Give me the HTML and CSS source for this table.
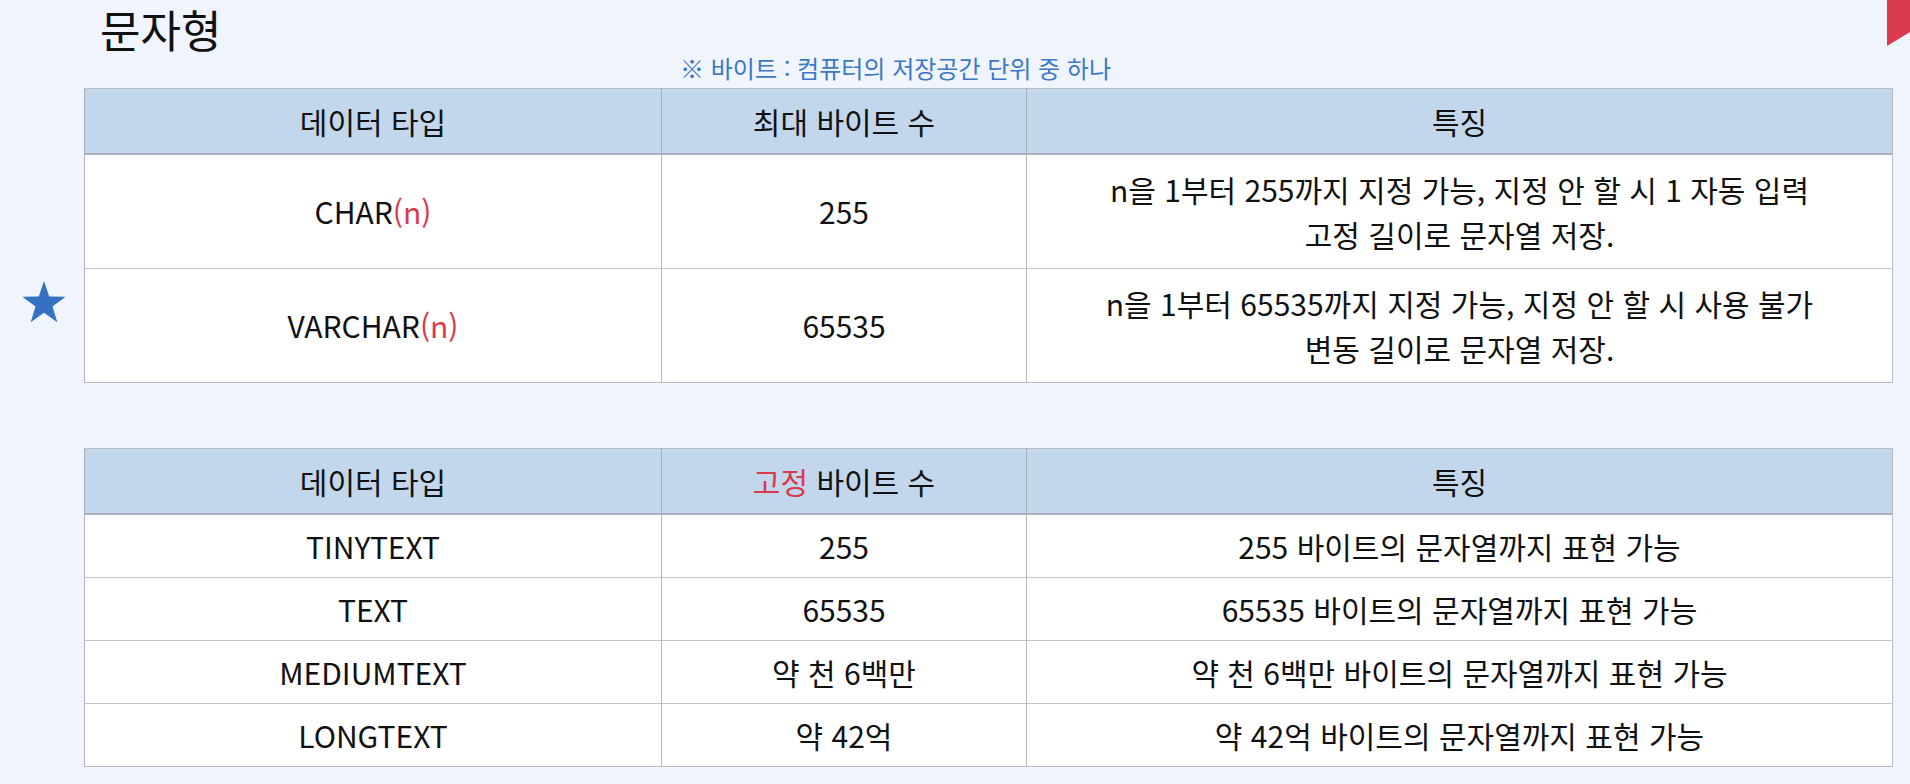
FILE: index.html
```html
<!DOCTYPE html>
<html lang="ko">
<head>
<meta charset="utf-8">
<link rel="stylesheet" href="styles.css">
</head>
<body>
<div class="page">
  <svg class="ribbon" width="23" height="46" viewBox="0 0 23 46"><polygon points="0,0 23,0 23,32 0,46" fill="#d93a4e"/></svg>
  <h1 class="title">문자형</h1>
  <p class="note">※ 바이트 : 컴퓨터의 저장공간 단위 중 하나</p>

  <div class="table-wrap">
    <svg class="star" width="44" height="42" viewBox="0 0 44 42"><polygon points="22,0 27.2,15.6 43.6,15.8 30.5,25.6 35.3,41.2 22,31.8 8.7,41.2 13.5,25.6 0.4,15.8 16.8,15.6" fill="#3570c2"/></svg>
    <table class="grid t1">
      <colgroup><col class="c1"><col class="c2"><col class="c3"></colgroup>
      <thead>
        <tr><th>데이터 타입</th><th>최대 바이트 수</th><th>특징</th></tr>
      </thead>
      <tbody>
        <tr class="tall"><td>CHAR<span class="red">(n)</span></td><td>255</td><td>n을 1부터 255까지 지정 가능, 지정 안 할 시 1 자동 입력<br>고정 길이로 문자열 저장.</td></tr>
        <tr class="tall"><td>VARCHAR<span class="red">(n)</span></td><td>65535</td><td>n을 1부터 65535까지 지정 가능, 지정 안 할 시 사용 불가<br>변동 길이로 문자열 저장.</td></tr>
      </tbody>
    </table>
  </div>

  <div class="table-wrap second">
    <table class="grid t2">
      <colgroup><col class="c1"><col class="c2"><col class="c3"></colgroup>
      <thead>
        <tr><th>데이터 타입</th><th><span class="red">고정</span> 바이트 수</th><th>특징</th></tr>
      </thead>
      <tbody>
        <tr><td>TINYTEXT</td><td>255</td><td>255 바이트의 문자열까지 표현 가능</td></tr>
        <tr><td>TEXT</td><td>65535</td><td>65535 바이트의 문자열까지 표현 가능</td></tr>
        <tr><td>MEDIUMTEXT</td><td>약 천 6백만</td><td>약 천 6백만 바이트의 문자열까지 표현 가능</td></tr>
        <tr><td>LONGTEXT</td><td>약 42억</td><td>약 42억 바이트의 문자열까지 표현 가능</td></tr>
      </tbody>
    </table>
  </div>
</div>
</body>
</html>
```

FILE: styles.css
```css
html, body {
  margin: 0;
  padding: 0;
  background: #f0f4fd;
}
body {
  font-family: "Noto Sans CJK KR", "Noto Sans", sans-serif;
  color: #111;
  width: 1910px;
  height: 784px;
  overflow: hidden;
}
.page {
  position: relative;
  padding-top: 2px;
}
.ribbon {
  position: absolute;
  top: 0;
  right: 0;
}
.title {
  margin: 0 0 0 100px;
  font-size: 44px;
  font-weight: 400;
  line-height: 54px;
  color: #111;
}
.note {
  margin: -4px 0 0 680px;
  font-size: 24px;
  line-height: 32px;
  color: #3b78c6;
}
.table-wrap {
  position: relative;
  margin: 4px 0 0 84px;
}
.table-wrap.second {
  margin-top: 65px;
}
.star {
  position: absolute;
  left: -62px;
  top: 193px;
}
.grid {
  width: 1808px;
  border-collapse: collapse;
  table-layout: fixed;
  background: #fff;
  font-size: 30px;
  border: 1px solid #b9bcc0;
}
.c1 { width: 577px; }
.c2 { width: 365px; }
.c3 { width: 866px; }
.grid th {
  background: #c2d7eb;
  font-weight: 400;
  height: 64px;
  padding: 0;
  text-align: center;
  border-bottom: 2px solid #a9b4bf;
  border-left: 1px solid #a7aeb5;
  border-top: 1px solid #b9bcc0;
}
.grid td {
  text-align: center;
  padding: 0;
  border-left: 1px solid #b3b6ba;
  border-top: 1px solid #c3c5c8;
  line-height: 45px;
}
.t1 tr.tall td {
  height: 113px;
}
.t2 td {
  height: 62px;
  line-height: 40px;
}
.red {
  color: #d93a4e;
}
```
